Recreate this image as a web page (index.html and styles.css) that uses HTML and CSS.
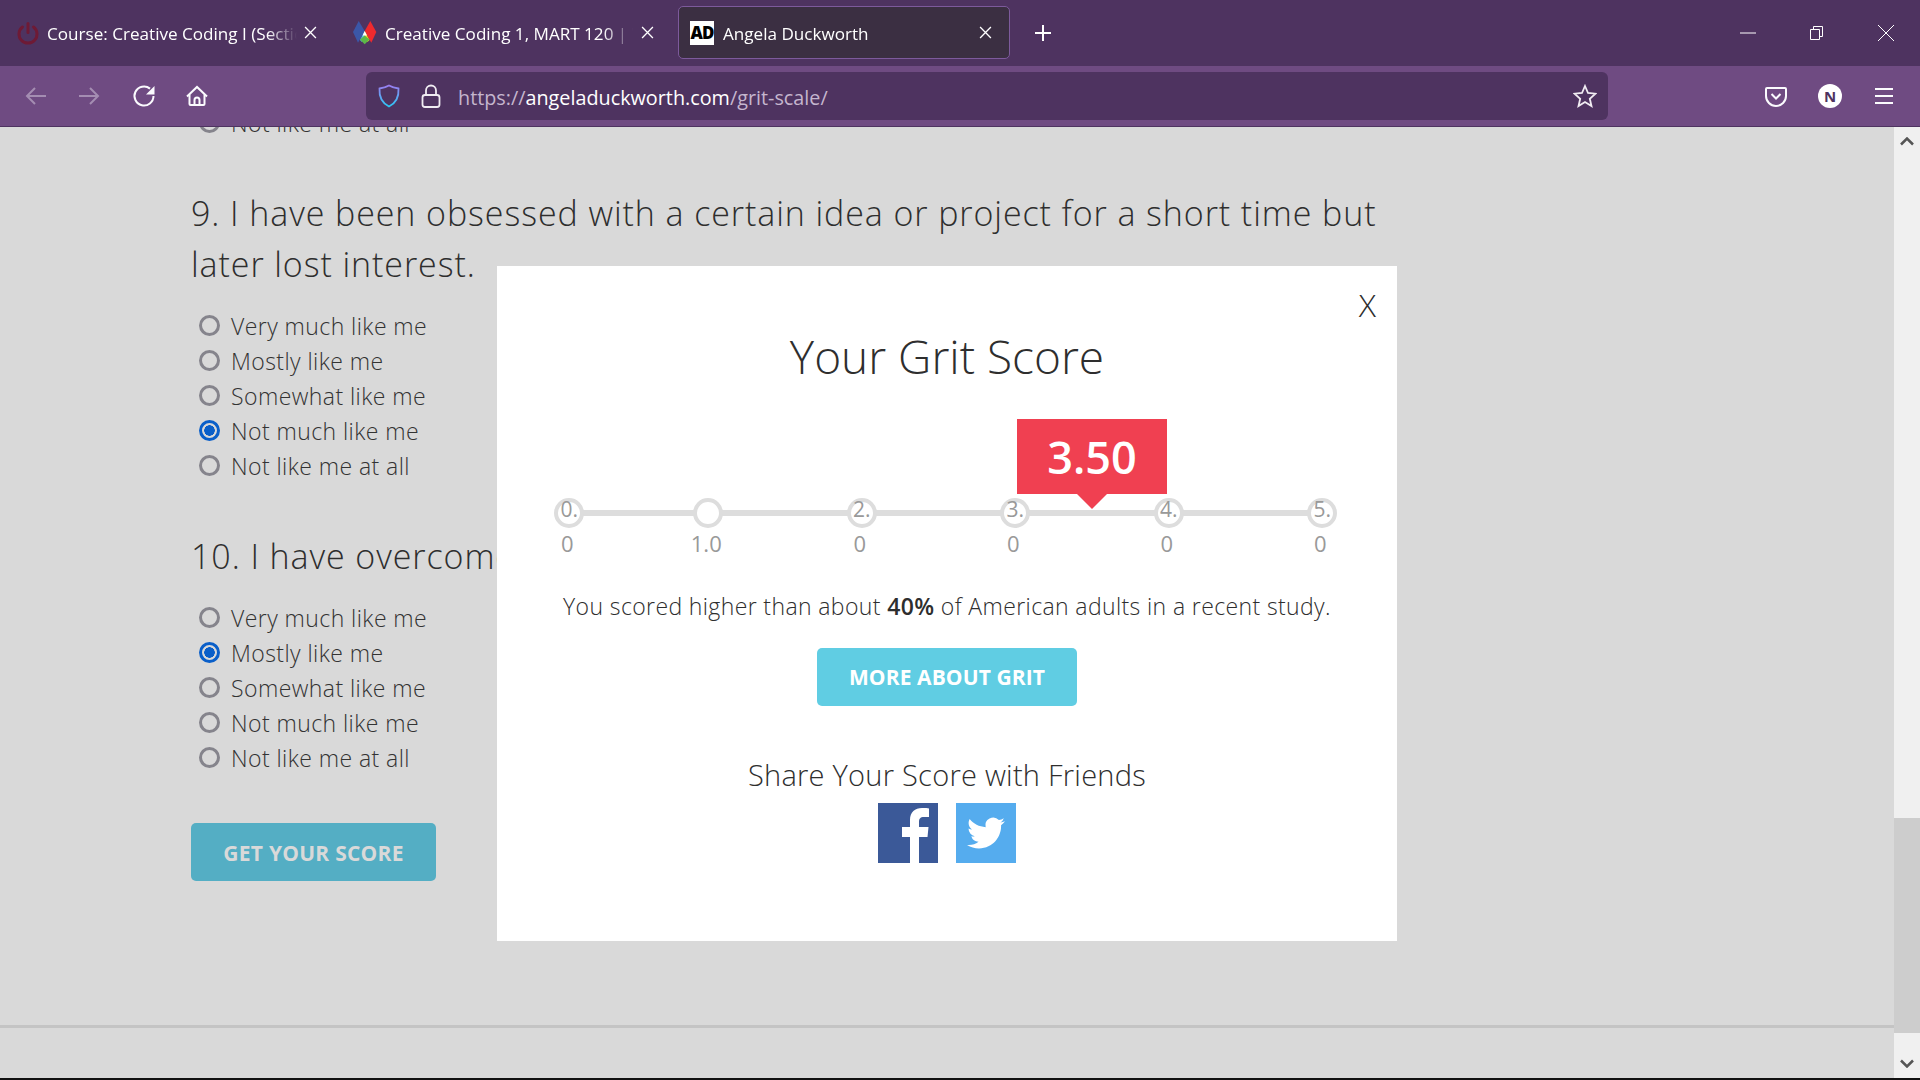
FILE: index.html
```html
<!DOCTYPE html>
<html lang="en">

<head>
  <meta charset="UTF-8">
  <meta name="viewport" content="width=device-width, initial-scale=1.0">
  <title>Angela Duckworth</title>
  <link rel="stylesheet" href="styles.css">
</head>

<body>
  <div class="tabstrip">
    <div class="tab tab-one">
      <svg class="favicon" viewBox="0 0 24 24" fill="none" stroke="#6e1a35" stroke-width="3" stroke-linecap="round"><path d="M12 2.500v9"/><path d="M6.500 6a9 9 0 1 0 11 0"/></svg>
      <span class="tab-title">Course: Creative Coding I (Section 001)</span>
      <svg class="tab-close" viewBox="0 0 12 12"><path d="M1 1l10 10M11 1L1 11"/></svg>
    </div>
    <div class="tab tab-two">
      <svg class="favicon" viewBox="0 0 24 24"><path d="M5.700 0l6 10L5 21.700 0 11z" fill="#3b57a8"/><path d="M17.300 0l6 11-5 10.700L11.700 10z" fill="#ee2a2e"/><path d="M11.700 10L7 19l2 2 2.700-6z" fill="#55c8e8"/><path d="M11.700 10l4.800 9-2 2-2.800-6z" fill="#f4d321"/><path d="M11.700 14.500l4.800 4-4.800 4.800L7 18.500z" fill="#5cb848"/><path d="M11.700 10l2.300 4.500H9.500z" fill="#fff"/></svg>
      <span class="tab-title">Creative Coding 1, MART 120 | Week 1</span>
      <svg class="tab-close" viewBox="0 0 12 12"><path d="M1 1l10 10M11 1L1 11"/></svg>
    </div>
    <div class="tab tab-active">
      <span class="ad-icon">AD</span>
      <span class="tab-title">Angela Duckworth</span>
      <svg class="tab-close" viewBox="0 0 12 12"><path d="M1 1l10 10M11 1L1 11"/></svg>
    </div>
    <svg class="new-tab" viewBox="0 0 18 18"><path d="M9 1v16M1 9h16"/></svg>
    <div class="window-btns">
      <svg class="win-btn" viewBox="0 0 16 16"><path d="M0 8h16"/></svg>
      <svg class="win-btn" viewBox="0 0 16 16"><path d="M1.500 4.500h9v10h-9zM4.500 4.500v-3h9v10h-3"/></svg>
      <svg class="win-btn" viewBox="0 0 16 16"><path d="M0 0l16 16M16 0L0 16"/></svg>
    </div>
  </div>

  <div class="toolbar">
    <svg class="tool-icon dim" viewBox="0 0 24 24"><path d="M22 12H3M11 4l-8 8 8 8"/></svg>
    <svg class="tool-icon dim" viewBox="0 0 24 24"><path d="M2 12h19M13 4l8 8-8 8"/></svg>
    <svg class="tool-icon reload" viewBox="0 0 24 24"><path d="M21.500 12a9.500 9.500 0 1 1-3.500-7.400"/><path d="M22.500 2v8.500H14z" fill="#fbfbfe" stroke="none"/></svg>
    <svg class="tool-icon" viewBox="0 0 24 24"><path d="M2 12.500L12 3l10 9.500"/><path d="M4.500 10.500V20a1 1 0 0 0 1 1h13a1 1 0 0 0 1-1v-9.500"/><path d="M9.500 21v-5a2.500 2.500 0 0 1 5 0v5"/></svg>
    <div class="urlbar">
      <svg class="url-icon shield" viewBox="0 0 24 24">
        <defs>
          <linearGradient id="shieldGrad" x1="0" y1="0" x2="0" y2="1">
            <stop offset="0" stop-color="#9a7df0"/>
            <stop offset="1" stop-color="#2cc8f5"/>
          </linearGradient>
        </defs>
        <path d="M12 1.500c3 1.800 6 2.600 9.500 3 .5 8-2.500 14.500-9.500 18-7-3.500-10-10-9.500-18 3.500-.4 6.500-1.200 9.500-3z" stroke="url(#shieldGrad)"/>
      </svg>
      <svg class="url-icon" viewBox="0 0 24 24"><rect x="3.500" y="11" width="17" height="12" rx="2.500"/><path d="M7 11V6.500a5 5 0 0 1 10 0V11"/></svg>
      <span class="url-text">https://<b>angeladuckworth.com</b>/grit-scale/</span>
      <svg class="url-icon star" viewBox="0 0 24 24"><path d="M12 2l3 7 7.500.7-5.700 5 1.700 7.300L12 18l-6.500 4 1.700-7.300-5.700-5L9 9z"/></svg>
    </div>
    <div class="toolbar-right">
      <svg class="tool-icon" viewBox="0 0 24 24"><path d="M3 4h18a1 1 0 0 1 1 1v7a10 10 0 0 1-20 0V5a1 1 0 0 1 1-1z"/><path d="M7.500 10l4.500 4.500 4.500-4.500"/></svg>
      <span class="avatar">N</span>
      <svg class="tool-icon" viewBox="0 0 24 24"><path d="M3 5h18M3 12h18M3 19h18"/></svg>
    </div>
  </div>

  <div class="viewport">
    <div class="page">
      <div class="survey">
        <ul class="options">
          <li><span class="radio"></span>Not like me at all</li>
        </ul>

        <h2 class="question">9. I have been obsessed with a certain idea or project for a short time but later lost interest.</h2>
        <ul class="options">
          <li><span class="radio"></span>Very much like me</li>
          <li><span class="radio"></span>Mostly like me</li>
          <li><span class="radio"></span>Somewhat like me</li>
          <li><span class="radio checked"></span>Not much like me</li>
          <li><span class="radio"></span>Not like me at all</li>
        </ul>

        <h2 class="question">10. I have overcome setbacks to conquer an important challenge.</h2>
        <ul class="options">
          <li><span class="radio"></span>Very much like me</li>
          <li><span class="radio checked"></span>Mostly like me</li>
          <li><span class="radio"></span>Somewhat like me</li>
          <li><span class="radio"></span>Not much like me</li>
          <li><span class="radio"></span>Not like me at all</li>
        </ul>

        <a class="btn-score">GET YOUR SCORE</a>
      </div>
      <div class="footer-line"></div>
    </div>

    <div class="scrollbar">
      <svg class="scroll-arrow" viewBox="0 0 14 9"><path d="M1 7.500l6-6 6 6"/></svg>
      <div class="scroll-track"><div class="scroll-thumb"></div></div>
      <svg class="scroll-arrow" viewBox="0 0 14 9"><path d="M1 1.500l6 6 6-6"/></svg>
    </div>

    <!-- popup over the page -->
    <div class="modal">
      <span class="modal-close">X</span>
      <h1 class="modal-title">Your Grit Score</h1>

      <div class="scale">
        <div class="score-tip">3.50</div>
        <div class="step"><span class="dot">0.</span><span class="step-label">0</span></div>
        <div class="step"><span class="dot"></span><span class="step-label">1.0</span></div>
        <div class="step"><span class="dot">2.</span><span class="step-label">0</span></div>
        <div class="step"><span class="dot">3.</span><span class="step-label">0</span></div>
        <div class="step"><span class="dot">4.</span><span class="step-label">0</span></div>
        <div class="step"><span class="dot">5.</span><span class="step-label">0</span></div>
      </div>

      <p class="result">You scored higher than about <b>40%</b> of American adults in a recent study.</p>
      <a class="btn-more">MORE ABOUT GRIT</a>
      <h3 class="share-title">Share Your Score with Friends</h3>
      <div class="share-icons">
        <span class="share fb">
          <svg viewBox="0 0 60 60"><path d="M32 60V34h-8V24h8v-7c0-8 5-12 12-12 3 0 6 .2 7 .4V14h-5c-4 0-5 2-5 5V24h9.500L49.500 34H41v26z" fill="#fff"/></svg>
        </span>
        <span class="share tw">
          <svg viewBox="-6 -7 36 38"><path d="M23.953 4.570a10 10 0 0 1-2.825.775 4.958 4.958 0 0 0 2.163-2.723c-.951.555-2.005.959-3.127 1.184a4.920 4.920 0 0 0-8.384 4.482C7.690 8.095 4.067 6.130 1.640 3.162a4.822 4.822 0 0 0-.666 2.475c0 1.710.870 3.213 2.188 4.096a4.904 4.904 0 0 1-2.228-.616v.060a4.923 4.923 0 0 0 3.946 4.827 4.996 4.996 0 0 1-2.212.085 4.936 4.936 0 0 0 4.604 3.417 9.867 9.867 0 0 1-6.102 2.105c-.390 0-.779-.023-1.170-.067a13.995 13.995 0 0 0 7.557 2.209c9.053 0 13.998-7.496 13.998-13.985 0-.210 0-.420-.015-.630A9.935 9.935 0 0 0 24 4.590z" fill="#fff"/></svg>
        </span>
      </div>
    </div>
  </div>

  <div class="screen-edge"></div>
</body>

</html>
```

FILE: styles.css
```css
* {
  margin: 0;
  padding: 0;
  box-sizing: border-box;
}

body {
  width: 1920px;
  height: 1080px;
  overflow: hidden;
  display: flex;
  flex-direction: column;
  font-family: "Open Sans", "Liberation Sans", sans-serif;
  background: #d9d9d9;
}

/* browser tabs */
.tabstrip {
  height: 66px;
  display: flex;
  align-items: flex-start;
  padding: 6px 0 0 11px;
  background: #4e3360;
}

.tab {
  height: 53px;
  display: flex;
  align-items: center;
  gap: 9px;
  margin-right: 6px;
  color: #fff;
  font-size: 17.100px;
  border: 1px solid transparent;
  border-radius: 5px;
}

.tab-one {
  width: 335px;
  gap: 7px;
  padding: 0 28px 0 4px;
}

.tab-two {
  width: 320px;
  gap: 8px;
  padding: 0 17px 0 0;
}

.tab-active {
  width: 332px;
  padding: 0 17px 0 11px;
  margin-right: 0;
  background: #3b2f42;
  border-color: #7d5a9c;
}

.favicon {
  width: 24px;
  height: 24px;
  flex: none;
}

.ad-icon {
  width: 24px;
  height: 24px;
  flex: none;
  background: #fff;
  color: #000;
  font-size: 17px;
  font-weight: 800;
  line-height: 24px;
  text-align: center;
  letter-spacing: -1px;
}

.tab-title {
  flex: 1;
  padding-top: 1px;
  overflow: hidden;
  white-space: nowrap;
  -webkit-mask-image: linear-gradient(to right, #000 88%, transparent);
  mask-image: linear-gradient(to right, #000 88%, transparent);
}

.tab-close {
  width: 13px;
  height: 13px;
  flex: none;
  fill: none;
  stroke: #fff;
  stroke-width: 1.2;
}

.new-tab {
  width: 18px;
  height: 18px;
  margin: 18px 0 0 24px;
  fill: none;
  stroke: #fff;
  stroke-width: 2;
}

.window-btns {
  margin-left: auto;
  display: flex;
  gap: 53px;
  padding: 19px 26px 0 0;
}

.win-btn {
  width: 16px;
  height: 16px;
  fill: none;
  stroke: #fff;
  stroke-width: 1;
}

/* nav bar */
.toolbar {
  height: 61px;
  display: flex;
  align-items: center;
  gap: 29px;
  padding: 0 24px;
  background: #6f4b82;
  border-bottom: 1px solid #4e3360;
}

.tool-icon {
  width: 24px;
  height: 24px;
  flex: none;
  fill: none;
  stroke: #fbfbfe;
  stroke-width: 2;
}

.tool-icon.dim {
  stroke: #a48db2;
}

.tool-icon.reload {
  margin-left: 2px;
}

.urlbar {
  width: 1243px;
  height: 48px;
  display: flex;
  align-items: center;
  gap: 18px;
  margin-left: 128px;
  padding: 0 11px;
  background: #4e3360;
  border-radius: 6px;
}

.url-icon {
  width: 24px;
  height: 24px;
  flex: none;
  fill: none;
  stroke: #f0ecf2;
  stroke-width: 1.8;
}

.url-text {
  flex: 1;
  margin-left: -3px;
  padding-top: 2px;
  color: #c5b6ce;
  font-size: 19.800px;
}

.url-text b {
  color: #fff;
  font-weight: 400;
}

.toolbar-right {
  display: flex;
  align-items: center;
  gap: 30px;
  margin-left: 127px;
}

.avatar {
  width: 24px;
  height: 24px;
  border-radius: 50%;
  background: #fff;
  color: #4e3360;
  font-size: 15px;
  font-weight: 700;
  line-height: 24px;
  text-align: center;
}

/* page under the popup */
.viewport {
  flex: 1;
  display: flex;
  position: relative;
  overflow: hidden;
}

.page {
  flex: 1;
  display: flex;
  flex-direction: column;
  overflow: hidden;
}

.survey {
  margin-top: -22px;
  padding-left: 191px;
  height: 920px;
}

.options {
  list-style: none;
}

.options li {
  height: 35px;
  display: flex;
  align-items: center;
  gap: 11px;
  padding-left: 8px;
  color: #333;
  font-size: 23px;
  font-weight: 300;
  letter-spacing: 0.430px;
}

.radio {
  width: 21px;
  height: 21px;
  flex: none;
  border: 3px solid #85848c;
  border-radius: 50%;
}

.radio.checked {
  border-color: #0a5fc9;
  background: radial-gradient(circle, #0a5fc9 0 5px, #d9d9d9 5.500px);
}

.question {
  width: 1210px;
  margin: 48px 0 18px;
  color: #2e2e2e;
  font-size: 34px;
  font-weight: 300;
  line-height: 51px;
  letter-spacing: 0.910px;
}

.btn-score {
  display: block;
  width: 245px;
  height: 58px;
  margin-top: 48px;
  background: #54aec4;
  border-radius: 5px;
  color: #d9d9d9;
  font-size: 21px;
  font-weight: 700;
  line-height: 60px;
  letter-spacing: 0.250px;
  text-align: center;
}

.footer-line {
  height: 3px;
  background: #c4c4c4;
}

.scrollbar {
  width: 26px;
  display: flex;
  flex-direction: column;
  align-items: center;
  background: #f0f0f0;
}

.scroll-arrow {
  width: 14px;
  height: 9px;
  margin: 10px 0;
  flex: none;
  fill: none;
  stroke: #555;
  stroke-width: 2.500;
}

.scroll-track {
  flex: 1;
  width: 100%;
  display: flex;
  flex-direction: column;
  justify-content: flex-end;
  margin-bottom: 16px;
}

.scroll-thumb {
  height: 215px;
  background: #cdcdcd;
}

/* popup */
.modal {
  width: 900px;
  height: 675px;
  position: absolute;
  top: 139px;
  left: 497px;
  display: flex;
  flex-direction: column;
  align-items: center;
  padding-top: 60px;
  background: #fff;
  color: #2e2e2e;
}

.modal-close {
  position: absolute;
  top: 17px;
  right: 21px;
  font-size: 32px;
  font-weight: 300;
}

.modal-title {
  font-size: 46px;
  font-weight: 300;
  line-height: 60px;
}

.scale {
  display: grid;
  grid-template-columns: 124.500px repeat(5, 153.500px);
  position: relative;
  align-self: flex-start;
  margin: 112px 0 0 10px;
}

/* line behind the circles */
.scale::before {
  content: '';
  position: absolute;
  top: 12px;
  left: 62px;
  width: 753px;
  height: 6px;
  background: #ddd;
}

.step {
  position: relative;
  display: flex;
  flex-direction: column;
  align-items: center;
  color: #999;
  font-size: 22px;
}

.dot {
  width: 30px;
  height: 30px;
  border: 4px solid #ddd;
  border-radius: 50%;
  background: #fff;
  font-size: 21px;
  line-height: 15px;
  text-align: center;
}

.step-label {
  margin-left: -4px;
  line-height: 30px;
}

.score-tip {
  position: absolute;
  z-index: 1;
  top: -79px;
  left: 510px;
  width: 150px;
  height: 75px;
  background: #f04051;
  color: #fff;
  font-size: 45px;
  font-weight: 600;
  line-height: 75px;
  text-align: center;
}

.score-tip::after {
  content: '';
  position: absolute;
  top: 75px;
  left: 60px;
  border-top: 15px solid #f04051;
  border-left: 15px solid transparent;
  border-right: 15px solid transparent;
}

.result {
  margin-top: 32px;
  font-size: 23px;
  font-weight: 300;
  line-height: 32px;
  letter-spacing: 0.380px;
}

.result b {
  font-weight: 600;
}

.btn-more {
  display: block;
  width: 260px;
  height: 58px;
  margin-top: 26px;
  background: #60cde3;
  border-radius: 5px;
  color: #fff;
  font-size: 21px;
  font-weight: 700;
  line-height: 58px;
  letter-spacing: 0.100px;
  text-align: center;
}

.share-title {
  margin-top: 48px;
  font-size: 29px;
  font-weight: 300;
  line-height: 42px;
  letter-spacing: 0.250px;
}

.share-icons {
  display: flex;
  gap: 18px;
  margin-top: 7px;
}

.share {
  width: 60px;
  height: 60px;
  display: block;
}

.share svg {
  display: block;
  width: 60px;
  height: 60px;
}

.fb {
  background: #3b5998;
}

.tw {
  background: #55acee;
}

.screen-edge {
  height: 2px;
  background: #111;
}
```
